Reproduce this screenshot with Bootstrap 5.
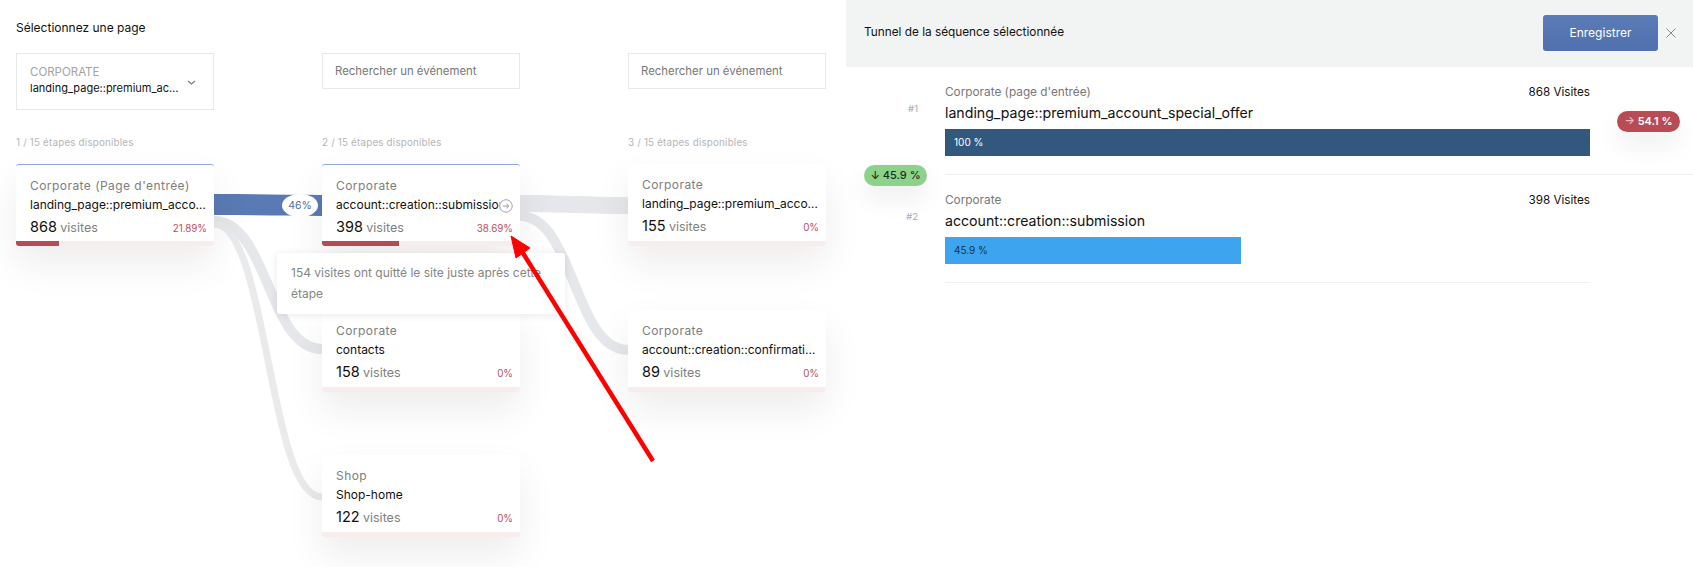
<!DOCTYPE html>
<html lang="fr">
<head>
  <meta charset="UTF-8"/>
  <title>Tunnel</title>
  <link href="https://cdn.jsdelivr.net/npm/bootstrap@5.3.0/dist/css/bootstrap.min.css" rel="stylesheet"/>
  <style>
    html, body { height:100%; overflow:hidden; }
    body { background:#fff; color:#111; font-family:Inter,"Liberation Sans",sans-serif; font-size:12px; }
    .app-shell { width:1693px; height:567px; position:relative; overflow:hidden; }
    .left-pane { width:846px; height:567px; padding:20px 20px 0 16px; position:relative; flex:none; }
    .pane-title { font-size:12px; line-height:16px; margin-bottom:17px; }
    .flow-svg { position:absolute; left:0; top:0; z-index:0; }
    .step-cols { position:relative; z-index:1; gap:108px; }
    .step-col { width:198px; flex:none; }
    .col-head { height:111px; padding-bottom:14px; }
    .step-count { font-size:9.8px; line-height:14px; color:#b5b5b5; letter-spacing:.2px; }
    .page-select { height:57px; border:1px solid #e8e8e8; padding:10px 13px; position:relative; background:#fff; }
    .page-select .sel-group { font-size:11.5px; line-height:16px; color:#a3a3a3; }
    .page-select .sel-value { font-size:11px; line-height:17px; width:152px; }
    .sel-chevron { position:absolute; left:169px; top:25px; }
    .event-search.form-control { height:36px; border:1px solid #e8e8e8; border-radius:0; padding:0 12px; font-size:11.4px; box-shadow:none; }
    .event-search.form-control::placeholder { color:#777; opacity:1; }
    .node-card.card { height:82px; border:0; border-radius:3px; margin-bottom:63.5px; background:#fff; box-shadow:0 18px 38px rgba(0,0,0,.075); overflow:hidden; position:relative; }
    .step-col .node-card:last-child { margin-bottom:0; }
    .node-card.is-active { border-top:1px solid #90a9d8; }
    .node-body { padding:12px 7px 0 14px; flex:1; min-height:0; }
    .node-group { font-size:12px; line-height:18px; color:#7d7d7d; letter-spacing:.45px; white-space:nowrap; }
    .node-name { font-size:12px; line-height:18px; color:#111; margin-top:1px; white-space:nowrap; overflow:hidden; text-overflow:ellipsis; }
    .node-stats { margin-top:2px; line-height:22px; }
    .node-num { font-size:14.5px; color:#111; }
    .node-unit { font-size:12.5px; color:#808080; }
    .node-pct { font-size:9.8px; color:#b9505a; }
    .node-go { position:absolute; right:7px; top:34px; width:14px; height:14px; background:#fff; border-radius:50%; }
    .exit-track.progress { height:5px; border-radius:0; background:#f9eced; flex:none; }
    .exit-track .progress-bar { background:#b34c54; }
    .flow-pct { position:absolute; left:282px; top:194px; width:36px; height:23px; line-height:24px; text-align:center; z-index:1; font-size:10.5px; color:#4d6da8; background:#fff; border-radius:50%/50%; }
    .exit-tip { position:absolute; left:277px; top:253px; width:288px; height:61px; z-index:2; background:#fff; border-radius:3px; padding:9px 14px; font-size:12px; line-height:21px; color:#858585; box-shadow:0 1px 8px rgba(0,0,0,.09); }
    .note-arrow { position:absolute; left:0; top:0; z-index:3; pointer-events:none; }
    .right-pane { width:847px; height:567px; position:relative; }
    .tunnel-head { height:67px; background:#f2f4f4; padding:15px 17px 16px 18px; font-size:11.8px; }
    .save-btn.btn { width:115px; height:36px; padding:0; border:0; border-radius:3px; font-size:12px; color:#fff; background:linear-gradient(#5b7cb7,#5070ae); }
    .close-x { margin-left:8px; width:10px; height:10px; display:block; }
    .tunnel-row { position:relative; }
    .row-rank { width:99px; flex:none; padding:34px 27px 0 0; text-align:right; font-size:9.5px; line-height:16px; color:#aaa; }
    .row-main { width:645px; padding:16px 0 18px; border-bottom:1px solid #eff0f1; }
    .row-group { font-size:11.8px; line-height:18px; color:#777; }
    .row-visits { font-size:11.7px; line-height:18px; color:#111; }
    .row-name { font-size:14.15px; line-height:18px; margin-top:3px; color:#111; }
    .seq-bar.progress { height:27px; margin-top:7px; border-radius:0; background:transparent; }
    .seq-bar .progress-bar { font-size:10px; text-align:left; padding-left:9px; overflow:visible; }
    .seq-dark { background:#33587d; color:#fff; }
    .seq-blue { background:#3da5ef; color:#17324a; }
    .row-tail { position:absolute; left:744px; right:0; bottom:0; height:1px; background:#eff0f1; }
    .rate-pill.badge { position:absolute; width:63px; height:21px; line-height:21px; padding:0; font-size:11px; font-weight:500; border-radius:11px; box-shadow:0 12px 26px rgba(0,0,0,.08); }
    .rate-exit { left:771px; top:111px; background:#b84c55; color:#fff; font-weight:600 !important; }
    .rate-next { left:18px; top:165px; background:#8cd28a; color:#17301a; }
    .rate-exit span { color:#eeb9bd; }
  </style>
</head>
<body>
<div class="app-shell d-flex">
  <section class="left-pane">
    <svg class="flow-svg" width="846" height="567" fill="none">
      <path d="M214 194 C250 194 285 195 322 195 L322 216 C285 216 250 215 214 215 Z" fill="#5a7ab5"/>
      <path d="M520 195 C560 195 590 197 628 197 L628 214 C590 214 560 212 520 212 Z" fill="#e6e7ea"/>
      <path d="M214 221 C268 221 268 349 322 349" stroke="#e6e7ea" stroke-width="10"/>
      <path d="M214 224 C268 224 268 497 322 497" stroke="#e9eaec" stroke-width="7"/>
      <path d="M520 216 C574 216 574 350 628 350" stroke="#e6e7ea" stroke-width="10"/>
    </svg>
    <div class="pane-title">Sélectionnez une page</div>
    <div class="step-cols d-flex">
      <div class="step-col">
        <div class="col-head d-flex flex-column justify-content-between">
          <div class="page-select">
            <div class="sel-group">CORPORATE</div>
            <div class="sel-value text-truncate">landing_page::premium_account_special_offer</div>
            <svg class="sel-chevron" width="11" height="7" viewBox="0 0 11 7" fill="none"><path d="M2 2l3.5 3L9 2" stroke="#777" stroke-width="1.1"/></svg>
          </div>
          <div class="step-count">1 / 15 étapes disponibles</div>
        </div>
        <div class="node-card card is-active">
          <div class="node-body">
            <div class="node-group">Corporate (Page d'entrée)</div>
            <div class="node-name">landing_page::premium_account_special_offer</div>
            <div class="node-stats d-flex justify-content-between align-items-baseline"><div><span class="node-num">868</span> <span class="node-unit">visites</span></div><span class="node-pct">21.89%</span></div>
          </div>
          <div class="exit-track progress"><div class="progress-bar" style="width:21.89%"></div></div>
        </div>
      </div>
      <div class="step-col">
        <div class="col-head d-flex flex-column justify-content-between">
          <input class="event-search form-control" placeholder="Rechercher un événement"/>
          <div class="step-count">2 / 15 étapes disponibles</div>
        </div>
        <div class="node-card card is-active">
          <div class="node-body">
            <div class="node-group">Corporate</div>
            <div class="node-name">account::creation::submission</div>
            <div class="node-stats d-flex justify-content-between align-items-baseline"><div><span class="node-num">398</span> <span class="node-unit">visites</span></div><span class="node-pct">38.69%</span></div>
          </div>
          <svg class="node-go" viewBox="0 0 14 14" fill="none"><circle cx="7" cy="7" r="6.3" stroke="#9a9a9a"/><path d="M3.8 7h6M7.6 4.8L9.8 7 7.6 9.2" stroke="#9a9a9a"/></svg>
          <div class="exit-track progress"><div class="progress-bar" style="width:38.69%"></div></div>
        </div>
        <div class="node-card card">
          <div class="node-body">
            <div class="node-group">Corporate</div>
            <div class="node-name">contacts</div>
            <div class="node-stats d-flex justify-content-between align-items-baseline"><div><span class="node-num">158</span> <span class="node-unit">visites</span></div><span class="node-pct">0%</span></div>
          </div>
          <div class="exit-track progress"></div>
        </div>
        <div class="node-card card">
          <div class="node-body">
            <div class="node-group">Shop</div>
            <div class="node-name">Shop-home</div>
            <div class="node-stats d-flex justify-content-between align-items-baseline"><div><span class="node-num">122</span> <span class="node-unit">visites</span></div><span class="node-pct">0%</span></div>
          </div>
          <div class="exit-track progress"></div>
        </div>
      </div>
      <div class="step-col">
        <div class="col-head d-flex flex-column justify-content-between">
          <input class="event-search form-control" placeholder="Rechercher un événement"/>
          <div class="step-count">3 / 15 étapes disponibles</div>
        </div>
        <div class="node-card card">
          <div class="node-body">
            <div class="node-group">Corporate</div>
            <div class="node-name">landing_page::premium_account_special_offer</div>
            <div class="node-stats d-flex justify-content-between align-items-baseline"><div><span class="node-num">155</span> <span class="node-unit">visites</span></div><span class="node-pct">0%</span></div>
          </div>
          <div class="exit-track progress"></div>
        </div>
        <div class="node-card card">
          <div class="node-body">
            <div class="node-group">Corporate</div>
            <div class="node-name">account::creation::confirmation</div>
            <div class="node-stats d-flex justify-content-between align-items-baseline"><div><span class="node-num">89</span> <span class="node-unit">visites</span></div><span class="node-pct">0%</span></div>
          </div>
          <div class="exit-track progress"></div>
        </div>
      </div>
    </div>
    <div class="flow-pct">46%</div>
    <div class="exit-tip">154 visites ont quitté le site juste après cette étape</div>
  </section>
  <section class="right-pane">
    <div class="tunnel-head d-flex align-items-center justify-content-between">
      <div>Tunnel de la séquence sélectionnée</div>
      <div class="d-flex align-items-center">
        <button class="save-btn btn" type="button">Enregistrer</button>
        <svg class="close-x" viewBox="0 0 10 10" fill="none"><path d="M.5.5l9 9M9.5.5l-9 9" stroke="#888" stroke-width="1"/></svg>
      </div>
    </div>
    <div class="tunnel-list">
      <div class="tunnel-row d-flex">
        <div class="row-rank">#1</div>
        <div class="row-main">
          <div class="d-flex justify-content-between"><span class="row-group">Corporate (page d'entrée)</span><span class="row-visits">868 Visites</span></div>
          <div class="row-name">landing_page::premium_account_special_offer</div>
          <div class="seq-bar progress"><div class="progress-bar seq-dark" style="width:100%">100 %</div></div>
        </div>
        <div class="row-tail"></div>
      </div>
      <div class="tunnel-row d-flex">
        <div class="row-rank">#2</div>
        <div class="row-main">
          <div class="d-flex justify-content-between"><span class="row-group">Corporate</span><span class="row-visits">398 Visites</span></div>
          <div class="row-name">account::creation::submission</div>
          <div class="seq-bar progress"><div class="progress-bar seq-blue" style="width:45.9%">45.9 %</div></div>
        </div>
      </div>
    </div>
    <div class="rate-pill badge rate-exit"><span>→</span> 54.1 %</div>
    <div class="rate-pill badge rate-next">↓ 45.9 %</div>
  </section>
  <svg class="note-arrow" width="846" height="567" fill="none">
    <path d="M653 461 L521 250" stroke="#f00" stroke-width="4.5"/>
    <path d="M511 236 L530 248 L516 258 Z" fill="#f00" stroke="#f00" stroke-width="1"/>
  </svg>
</div>
<script src="https://cdn.jsdelivr.net/npm/bootstrap@5.3.0/dist/js/bootstrap.bundle.min.js"></script>
</body>
</html>
